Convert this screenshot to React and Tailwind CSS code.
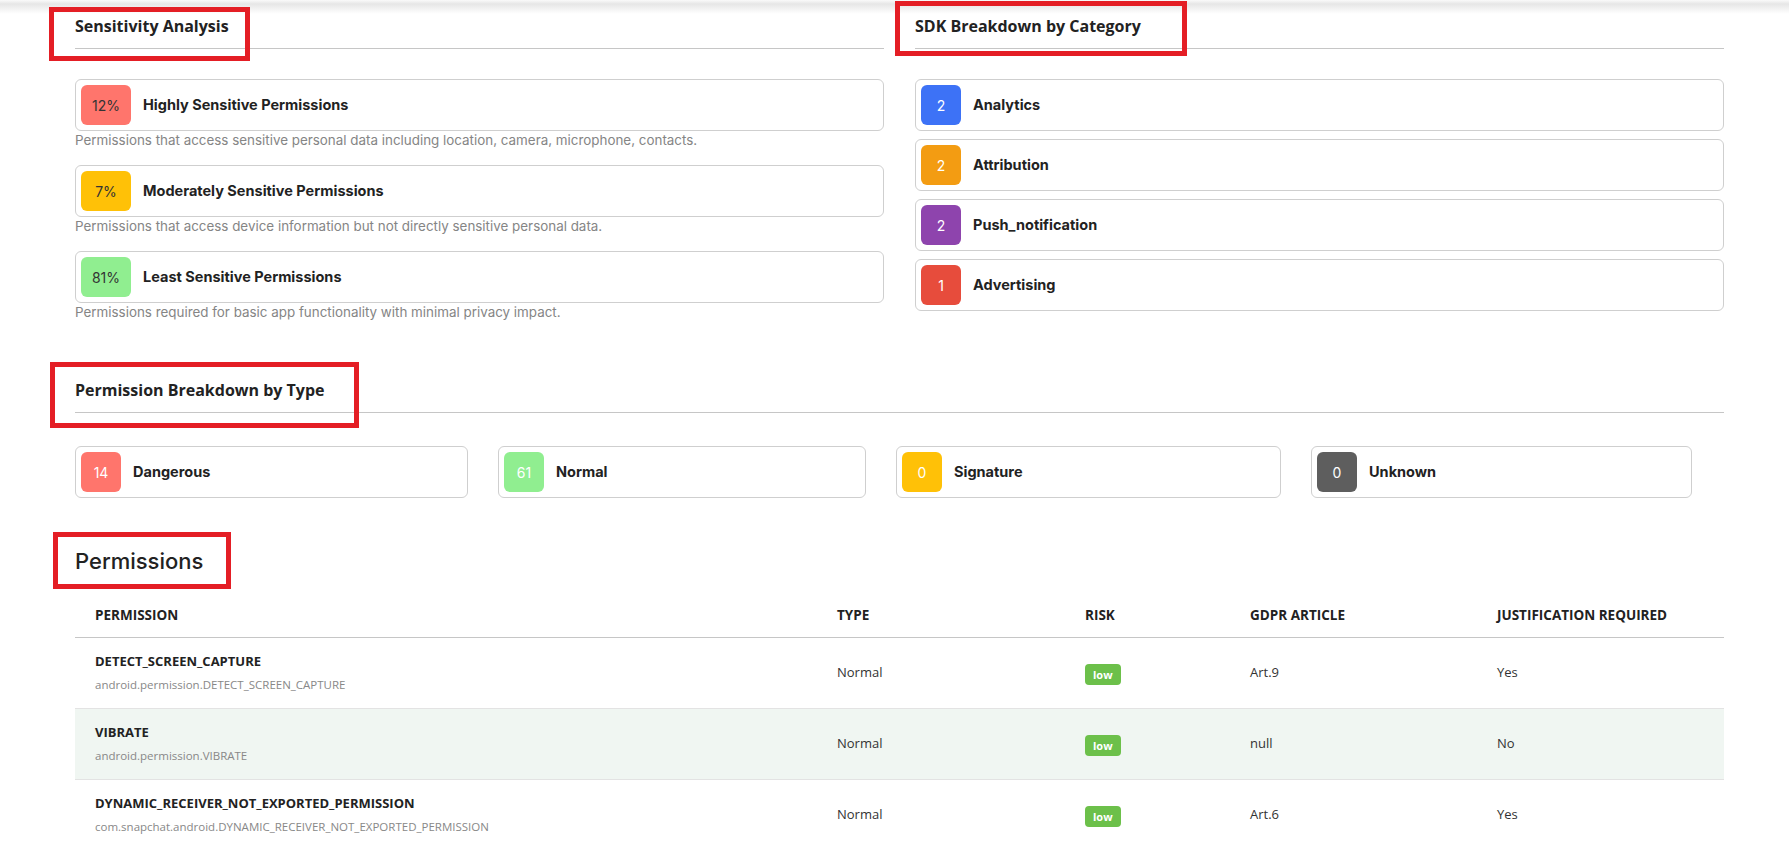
import React from 'react';

const sensitivity = [
  { pct: '12%', label: 'Highly Sensitive Permissions', color: 'bg-[#ff756c]', desc: 'Permissions that access sensitive personal data including location, camera, microphone, contacts.' },
  { pct: '7%', label: 'Moderately Sensitive Permissions', color: 'bg-[#ffc107]', desc: 'Permissions that access device information but not directly sensitive personal data.' },
  { pct: '81%', label: 'Least Sensitive Permissions', color: 'bg-[#90ee90]', desc: 'Permissions required for basic app functionality with minimal privacy impact.' },
];

const sdks = [
  { count: 2, label: 'Analytics', color: 'bg-[#3d72f6]' },
  { count: 2, label: 'Attribution', color: 'bg-[#f39c12]' },
  { count: 2, label: 'Push_notification', color: 'bg-[#8e44ad]' },
  { count: 1, label: 'Advertising', color: 'bg-[#e74c3c]' },
];

const types = [
  { count: 14, label: 'Dangerous', color: 'bg-[#ff756c]', w: 'w-[393px]' },
  { count: 61, label: 'Normal', color: 'bg-[#90ee90]', w: 'w-[368px]' },
  { count: 0, label: 'Signature', color: 'bg-[#ffc107]', w: 'w-[385px]' },
  { count: 0, label: 'Unknown', color: 'bg-[#5e5e5e]', w: 'w-[381px]' },
];

const permissions = [
  { name: 'DETECT_SCREEN_CAPTURE', full: 'android.permission.DETECT_SCREEN_CAPTURE', type: 'Normal', risk: 'low', gdpr: 'Art.9', just: 'Yes' },
  { name: 'VIBRATE', full: 'android.permission.VIBRATE', type: 'Normal', risk: 'low', gdpr: 'null', just: 'No' },
  { name: 'DYNAMIC_RECEIVER_NOT_EXPORTED_PERMISSION', full: 'com.snapchat.android.DYNAMIC_RECEIVER_NOT_EXPORTED_PERMISSION', type: 'Normal', risk: 'low', gdpr: 'Art.6', just: 'Yes' },
];

// section heading with the grey rule under it
const SectionTitle = ({ children }) => (
  <h2 className="border-b border-[#c6c6c6] pb-[11px] font-['Open_Sans',sans-serif] text-[16px] leading-[22px] font-bold text-[#222]">
    {children}
  </h2>
);

const StatCard = ({ value, label, color, dark, wide, className = '' }) => (
  <div className={`flex items-center gap-3 rounded-md border border-[#cfcfcf] bg-white p-[5px] ${className}`}>
    <div
      className={`flex h-10 items-center justify-center rounded-md text-[14px] ${color} ${wide ? 'w-[50px]' : 'w-10'} ${dark ? 'text-[#333]' : 'text-white'}`}
    >
      {value}
    </div>
    <span className="text-[14.5px] font-bold text-[#222]">{label}</span>
  </div>
);

const App = () => {
  return (
    <div className="relative min-h-screen bg-white pt-[15px] pr-[65px] pb-6 pl-[75px] font-['Inter',sans-serif]">
      {/* shadow from the header above */}
      <div className="pointer-events-none absolute top-0 right-0 left-0 h-[14px] bg-[linear-gradient(to_bottom,#fafafa_0px,#e6e6e6_4px,#ffffff_14px)]" />

      <div className="grid grid-cols-2 gap-x-[31px]">
        <section>
          <SectionTitle>Sensitivity Analysis</SectionTitle>
          <div className="mt-[30px] flex flex-col gap-4">
            {sensitivity.map((s) => (
              <div key={s.label}>
                <StatCard value={s.pct} label={s.label} color={s.color} dark wide />
                <p className="text-[13.4px] leading-[18px] text-[#858585]">{s.desc}</p>
              </div>
            ))}
          </div>
        </section>

        <section>
          <SectionTitle>SDK Breakdown by Category</SectionTitle>
          <div className="mt-[30px] flex flex-col gap-2">
            {sdks.map((s) => (
              <StatCard key={s.label} value={s.count} label={s.label} color={s.color} />
            ))}
          </div>
        </section>
      </div>

      <section className="mt-[58px]">
        <SectionTitle>Permission Breakdown by Type</SectionTitle>
        <div className="mt-[33px] flex">
          {types.map((t) => (
            <StatCard key={t.label} value={t.count} label={t.label} color={t.color} className={`mr-[30px] ${t.w}`} />
          ))}
        </div>
      </section>

      <section className="mt-[47px]">
        <h2 className="text-[22px] leading-[32px] font-medium text-[#222]">Permissions</h2>
        <table className="mt-4 w-full table-fixed border-collapse font-['Open_Sans',sans-serif]">
          <colgroup>
            <col className="w-[742px]" />
            <col className="w-[248px]" />
            <col className="w-[165px]" />
            <col className="w-[247px]" />
            <col className="w-[247px]" />
          </colgroup>
          <thead>
            <tr className="border-b border-[#c6c6c6]">
              {['Permission', 'Type', 'Risk', 'GDPR Article', 'Justification Required'].map((h) => (
                <th key={h} className="px-5 py-[13px] text-left text-[13.5px] leading-[18px] font-bold text-[#222] uppercase">
                  {h}
                </th>
              ))}
            </tr>
          </thead>
          <tbody>
            {permissions.map((p, i) => (
              <tr key={p.name} className={`border-b border-[#e3e3e3] ${i % 2 === 1 ? 'bg-[#f0f6f2]' : 'bg-white'}`}>
                <td className="px-5 py-[14px] align-middle">
                  <div className="text-[13px] leading-[18px] font-bold text-[#222]">{p.name}</div>
                  <div className="mt-[6px] text-[11.5px] leading-[18px] text-[#888]">{p.full}</div>
                </td>
                <td className="px-5 text-[13px] text-[#333]">{p.type}</td>
                <td className="px-5">
                  <span className="inline-block rounded-[4px] bg-[#6cc04a] px-2 text-[11px] leading-[21px] font-bold text-white">
                    {p.risk}
                  </span>
                </td>
                <td className="px-5 text-[13px] text-[#333]">{p.gdpr}</td>
                <td className="px-5 text-[13px] text-[#333]">{p.just}</td>
              </tr>
            ))}
          </tbody>
        </table>
      </section>

      {/* red annotation boxes */}
      <div className="pointer-events-none absolute top-[7px] left-[49px] h-[54px] w-[201px] border-[5px] border-[#e41e25]" />
      <div className="pointer-events-none absolute top-[1px] left-[895px] h-[55px] w-[292px] border-[5px] border-[#e41e25]" />
      <div className="pointer-events-none absolute top-[362px] left-[50px] h-[66px] w-[309px] border-[5px] border-[#e41e25]" />
      <div className="pointer-events-none absolute top-[532px] left-[53px] h-[57px] w-[178px] border-[5px] border-[#e41e25]" />
    </div>
  );
};

export default App;
